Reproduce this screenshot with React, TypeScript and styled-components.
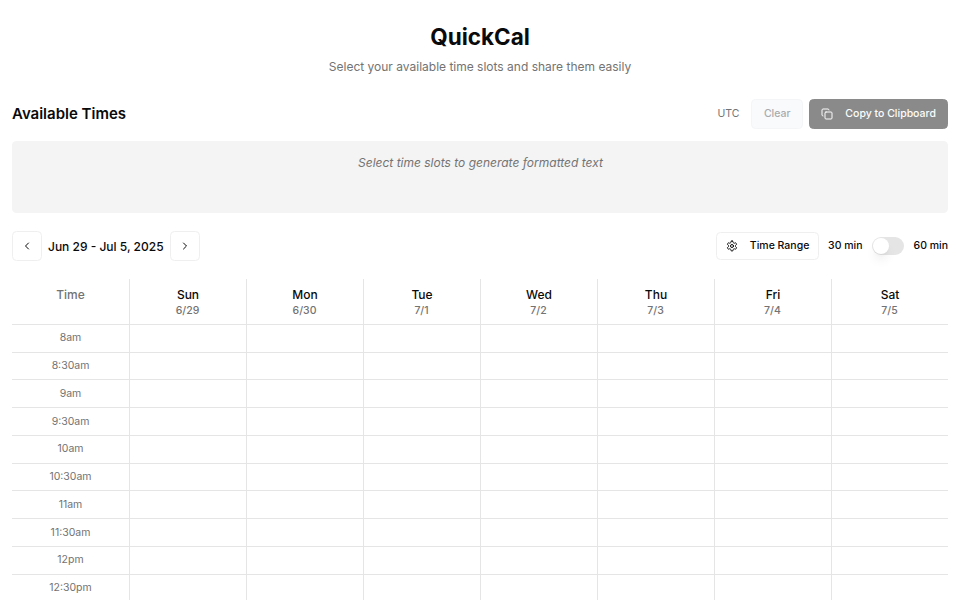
import React from "react";
import styled, { createGlobalStyle } from "styled-components";
import { ChevronLeft, ChevronRight, Copy } from "lucide-react";

const GlobalStyle = createGlobalStyle`
  *, *::before, *::after { box-sizing: border-box; }
  body {
    margin: 0;
    background: #fff;
    color: #0a0a0a;
    font-family: Inter, "Liberation Sans", sans-serif;
    overflow: hidden;
  }
  button { font-family: inherit; }
  h1, h2, p { margin: 0; }
`;

const Page = styled.main`
  height: 600px;
  overflow: hidden;
  padding: 18px 12px 0;
`;

const Header = styled.header`
  text-align: center;
  height: 80.75px;
`;

const Title = styled.h1`
  font-size: 22.5px;
  line-height: 37px;
  font-weight: 700;
`;

const Subtitle = styled.p`
  margin-top: 2.5px;
  font-size: 12px;
  line-height: 18px;
  color: #737373;
`;

const Bar = styled.div`
  display: flex;
  align-items: center;
  justify-content: space-between;
  height: 30px;
`;

const Group = styled.div<{ $gap: number }>`
  display: flex;
  align-items: center;
  gap: ${(p) => p.$gap}px;
`;

const SectionTitle = styled.h2`
  font-size: 15px;
  line-height: 21px;
  font-weight: 600;
`;

const Zone = styled.span`
  margin-right: 5.75px;
  font-size: 10.5px;
  line-height: 15px;
  padding-bottom: 1px;
  color: #737373;
`;

const Button = styled.button<{ $variant?: "solid" | "muted" | "outline"; $width: number; $height?: number }>`
  display: flex;
  align-items: center;
  justify-content: center;
  gap: 12px;
  width: ${(p) => p.$width}px;
  height: ${(p) => p.$height ?? 30}px;
  padding: 0;
  border-radius: 4.5px;
  font-size: 10.5px;
  line-height: 15px;
  font-weight: 500;
  border: 1px solid ${(p) => (p.$variant === "solid" ? "#8a8a8a" : p.$variant === "muted" ? "#f3f5f7" : "#efefef")};
  background: ${(p) => (p.$variant === "solid" ? "#8a8a8a" : p.$variant === "muted" ? "#f8fafc" : "#fff")};
  color: ${(p) => (p.$variant === "solid" ? "#fcfcfc" : p.$variant === "muted" ? "#a9abae" : "#0a0a0a")};
`;

const ButtonText = styled.span`
  padding-bottom: 1px;
`;

const Output = styled.section`
  height: 72px;
  margin: 12px 0 18px;
  padding: 12px 0 0 1px;
  border-radius: 4.5px;
  background: #f4f4f4;
  text-align: center;
  font-size: 12px;
  line-height: 20px;
  font-style: italic;
  color: #737373;
`;

const Range = styled.span`
  padding-top: 2px;
  font-size: 12px;
  line-height: 18px;
  font-weight: 500;
`;

const Label = styled.span`
  font-size: 10.5px;
  line-height: 15px;
  padding-bottom: 1px;
  font-weight: 500;
`;

const Toggle = styled.span`
  display: flex;
  align-items: center;
  width: 32.25px;
  height: 18px;
  margin-right: 0.75px;
  padding: 1px;
  border-radius: 9px;
  background: #e5e5e5;
`;

const Knob = styled.span`
  width: 16px;
  height: 16px;
  border-radius: 50%;
  background: #fff;
  box-shadow: 0 8px 11px -2px rgba(0, 0, 0, 0.08), 0 3px 5px -3px rgba(0, 0, 0, 0.08);
`;

const Calendar = styled.div`
  margin-top: 18px;
`;

const Row = styled.div<{ $height: number }>`
  display: grid;
  grid-template-columns: repeat(8, 1fr);
  height: ${(p) => p.$height}px;
`;

const Cell = styled.div`
  border-left: 1px solid #e5e5e5;
  border-bottom: 1px solid #e5e5e5;
  text-align: center;
  &:first-child { border-left: 0; }
`;

const HeadCell = styled(Cell)<{ $muted?: boolean }>`
  padding-top: 7px;
  font-size: 12px;
  line-height: 18px;
  font-weight: 500;
  color: ${(p) => (p.$muted ? "#737373" : "#0a0a0a")};
`;

const DayDate = styled.div`
  padding-right: 1px;
  font-size: 10.5px;
  line-height: 13px;
  font-weight: 500;
  color: #737373;
`;

const TimeCell = styled(Cell)`
  padding-top: 0.5px;
  font-size: 10.5px;
  line-height: 26px;
  color: #737373;
`;

const GearIcon = () => (
  <svg width="12" height="12" viewBox="0 0 24 24" fill="none" stroke="currentColor" strokeWidth="2" strokeLinecap="round" strokeLinejoin="round">
    <path d="M12.22 2h-.44a2 2 0 0 0-2 2v.18a2 2 0 0 1-1 1.73l-.43.25a2 2 0 0 1-2 0l-.15-.08a2 2 0 0 0-2.73.73l-.22.38a2 2 0 0 0 .73 2.73l.15.1a2 2 0 0 1 1 1.72v.51a2 2 0 0 1-1 1.74l-.15.09a2 2 0 0 0-.73 2.73l.22.38a2 2 0 0 0 2.73.73l.15-.08a2 2 0 0 1 2 0l.43.25a2 2 0 0 1 1 1.73V20a2 2 0 0 0 2 2h.44a2 2 0 0 0 2-2v-.18a2 2 0 0 1 1-1.73l.43-.25a2 2 0 0 1 2 0l.15.08a2 2 0 0 0 2.73-.73l.22-.39a2 2 0 0 0-.73-2.73l-.15-.08a2 2 0 0 1-1-1.74v-.5a2 2 0 0 1 1-1.74l.15-.09a2 2 0 0 0 .73-2.73l-.22-.38a2 2 0 0 0-2.73-.73l-.15.08a2 2 0 0 1-2 0l-.43-.25a2 2 0 0 1-1-1.73V4a2 2 0 0 0-2-2z" />
    <circle cx="12" cy="12" r="3" />
  </svg>
);

const days = [
  ["Sun", "6/29"],
  ["Mon", "6/30"],
  ["Tue", "7/1"],
  ["Wed", "7/2"],
  ["Thu", "7/3"],
  ["Fri", "7/4"],
  ["Sat", "7/5"],
];

const times = ["8am", "8:30am", "9am", "9:30am", "10am", "10:30am", "11am", "11:30am", "12pm", "12:30pm"];

export default function App() {
  return (
    <>
      <GlobalStyle />
      <Page>
        <Header>
          <Title>QuickCal</Title>
          <Subtitle>Select your available time slots and share them easily</Subtitle>
        </Header>
        <Bar>
          <SectionTitle>Available Times</SectionTitle>
          <Group $gap={6}>
            <Zone>UTC</Zone>
            <Button $variant="muted" $width={52}><ButtonText>Clear</ButtonText></Button>
            <Button $variant="solid" $width={138.75}>
              <Copy size={12} />
              <ButtonText>Copy to Clipboard</ButtonText>
            </Button>
          </Group>
        </Bar>
        <Output>Select time slots to generate formatted text</Output>
        <Bar>
          <Group $gap={6}>
            <Button $width={30} aria-label="Previous week"><ChevronLeft size={12} /></Button>
            <Range>Jun 29 - Jul 5, 2025</Range>
            <Button $width={30} aria-label="Next week"><ChevronRight size={12} /></Button>
          </Group>
          <Group $gap={9}>
            <Button $width={103} $height={28}>
              <GearIcon />
              <ButtonText>Time Range</ButtonText>
            </Button>
            <Label>30 min</Label>
            <Toggle role="switch" aria-checked="false"><Knob /></Toggle>
            <Label>60 min</Label>
          </Group>
        </Bar>
        <Calendar>
          <Row $height={46}>
            <HeadCell $muted>Time</HeadCell>
            {days.map(([name, date]) => (
              <HeadCell key={name}>
                {name}
                <DayDate>{date}</DayDate>
              </HeadCell>
            ))}
          </Row>
          {times.map((time) => (
            <Row key={time} $height={27.75}>
              <TimeCell>{time}</TimeCell>
              {days.map(([name]) => <Cell key={name} />)}
            </Row>
          ))}
        </Calendar>
      </Page>
    </>
  );
}
